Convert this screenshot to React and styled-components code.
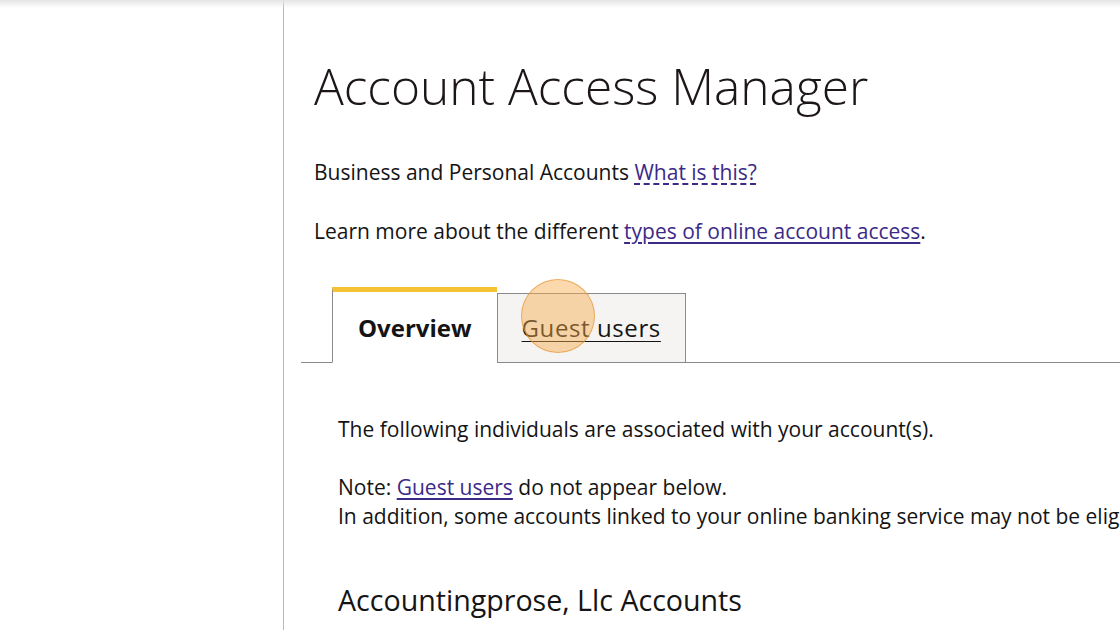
import React from 'react';
import styled, { createGlobalStyle } from 'styled-components';

const GlobalStyle = createGlobalStyle`
  html, body {
    margin: 0;
    padding: 0;
    background: #fff;
    font-family: "Open Sans", "Liberation Sans", sans-serif;
    color: #141414;
  }
`;

const Page = styled.div`
  display: flex;
  height: 630px;
  overflow: hidden;
  position: relative;
  &::before {
    content: '';
    position: absolute;
    left: 0;
    right: 0;
    top: 0;
    height: 8px;
    background: linear-gradient(#e4e4e4, rgba(255, 255, 255, 0));
  }
`;

const Sidebar = styled.aside`
  width: 283px;
  flex: none;
  border-right: 1px solid #b9b9b9;
`;

const Main = styled.main`
  flex: 1;
  padding: 56px 0 0 17px;
  min-width: 0;
  overflow: hidden;
`;

const Intro = styled.div`
  padding-left: 13px;
`;

const Title = styled.h1`
  margin: 0 0 42px;
  font-size: 49.6px;
  font-weight: 300;
  line-height: 60px;
  color: #1c1616;
  white-space: nowrap;
`;

const Para = styled.p`
  margin: 0 0 30px;
  font-size: 21px;
  line-height: 29px;
  white-space: nowrap;
`;

const Link = styled.a`
  color: #3b2a86;
  text-decoration: underline;
  text-decoration-style: ${p => (p.$dotted ? 'dashed' : 'solid')};
  text-underline-offset: 3px;
  cursor: pointer;
`;

const TabList = styled.div`
  display: flex;
  align-items: flex-end;
  padding-left: 31px;
  margin-top: 41px;
  border-bottom: 1px solid #8a8a8a;
`;

const Tab = styled.button`
  font-family: inherit;
  font-size: 24px;
  line-height: 30px;
  color: #141414;
  cursor: pointer;
  margin-bottom: -1px;
  border: 1px solid #8a8a8a;
  border-bottom: ${p => (p.$active ? '1px solid #fff' : '1px solid #8a8a8a')};
  border-top: ${p => (p.$active ? '5px solid #f5c234' : '1px solid #8a8a8a')};
  border-right: ${p => (p.$active ? 'none' : '1px solid #8a8a8a')};
  background: ${p => (p.$active ? '#fff' : '#f5f4f2')};
  font-weight: ${p => (p.$active ? 700 : 400)};
  letter-spacing: ${p => (p.$active ? '0' : '0.6px')};
  text-decoration: ${p => (p.$active ? 'none' : 'underline')};
  text-underline-offset: 4px;
  text-decoration-thickness: 1px;
  height: ${p => (p.$active ? '76px' : '70px')};
  padding: ${p => (p.$active ? '2px 25px 0 25px' : '0 24px 0 24px')};
  position: relative;
`;

const ClickMark = styled.span`
  position: absolute;
  left: 23px;
  top: -15px;
  width: 74px;
  height: 74px;
  border-radius: 50%;
  background: rgba(247, 170, 74, 0.45);
  border: 1px solid rgba(230, 150, 60, 0.7);
  box-sizing: border-box;
  pointer-events: none;
`;

const Panel = styled.section`
  padding: 52px 0 0 37px;
`;

const PanelText = styled.p`
  margin: 0 0 ${p => (p.$tight ? '0' : '29px')};
  font-size: 21px;
  line-height: 29px;
  white-space: nowrap;
`;

const SectionTitle = styled.h2`
  margin: 51px 0 0;
  font-size: 28.6px;
  font-weight: 400;
  line-height: 36px;
  white-space: nowrap;
`;

export default function App() {
  return (
    <>
      <GlobalStyle />
      <Page>
        <Sidebar />
        <Main>
          <Intro>
            <Title>Account Access Manager</Title>
            <Para>
              Business and Personal Accounts <Link $dotted>What is this?</Link>
            </Para>
            <Para>
              Learn more about the different <Link>types of online account access</Link>.
            </Para>
          </Intro>
          <TabList>
            <Tab $active>Overview</Tab>
            <Tab>
              Guest users
              <ClickMark />
            </Tab>
          </TabList>
          <Panel>
            <PanelText>The following individuals are associated with your account(s).</PanelText>
            <PanelText $tight>
              Note: <Link>Guest users</Link> do not appear below.
            </PanelText>
            <PanelText $tight>
              In addition, some accounts linked to your online banking service may not be eligible for access management.
            </PanelText>
            <SectionTitle>Accountingprose, Llc Accounts</SectionTitle>
          </Panel>
        </Main>
      </Page>
    </>
  );
}
